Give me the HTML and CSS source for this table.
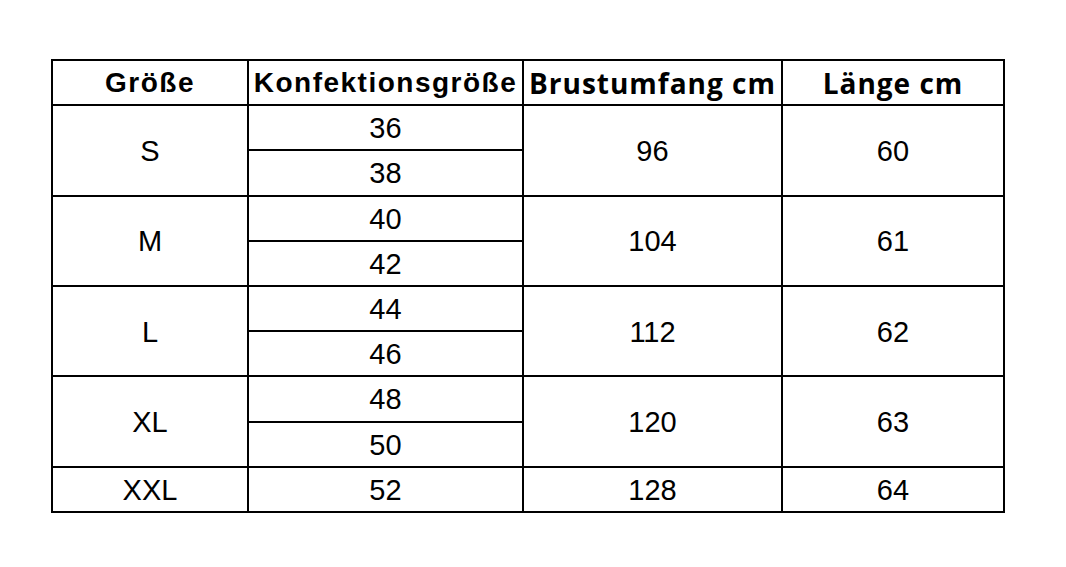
FILE: index.html
```html
<!DOCTYPE html>
<html lang="de">
<head>
<meta charset="utf-8">
<title>Größentabelle</title>
<link rel="stylesheet" href="styles.css">
</head>
<body>
<table class="size-table">
  <colgroup>
    <col class="c1"><col class="c2"><col class="c3"><col class="c4">
  </colgroup>
  <thead>
    <tr>
      <th class="h-narrow">Größe</th>
      <th class="h-narrow">Konfektionsgröße</th>
      <th class="h-wide">Brustumfang cm</th>
      <th class="h-wide">Länge cm</th>
    </tr>
  </thead>
  <tbody>
    <tr><td rowspan="2">S</td><td>36</td><td rowspan="2">96</td><td rowspan="2">60</td></tr>
    <tr><td>38</td></tr>
    <tr><td rowspan="2">M</td><td>40</td><td rowspan="2">104</td><td rowspan="2">61</td></tr>
    <tr><td>42</td></tr>
    <tr><td rowspan="2">L</td><td>44</td><td rowspan="2">112</td><td rowspan="2">62</td></tr>
    <tr><td>46</td></tr>
    <tr><td rowspan="2">XL</td><td>48</td><td rowspan="2">120</td><td rowspan="2">63</td></tr>
    <tr><td>50</td></tr>
    <tr><td>XXL</td><td>52</td><td>128</td><td>64</td></tr>
  </tbody>
</table>
</body>
</html>
```

FILE: styles.css
```css
html, body {
  margin: 0;
  padding: 0;
  background: #ffffff;
}
body {
  padding: 59px 0 0 51px;
}
.size-table {
  border-collapse: collapse;
  table-layout: fixed;
  width: 952px;
  color: #000;
}
.c1 { width: 196px; }
.c2 { width: 275px; }
.c3 { width: 259px; }
.c4 { width: 222px; }
.size-table th,
.size-table td {
  border: 2px solid #000;
  padding: 0;
  height: 45.2px;
  box-sizing: border-box;
  text-align: center;
  vertical-align: middle;
  line-height: 1;
}
.size-table td {
  font-family: "Liberation Sans", Arial, sans-serif;
  font-size: 29px;
  font-weight: 400;
  padding-top: 2px;
}
.size-table th {
  font-size: 28px;
  font-weight: 700;
  white-space: nowrap;
}
.h-narrow {
  font-family: "Liberation Sans", Arial, sans-serif;
  letter-spacing: 1.5px;
}
.h-wide {
  font-family: "Open Sans", "Liberation Sans", sans-serif;
  letter-spacing: 1px;
}
```
